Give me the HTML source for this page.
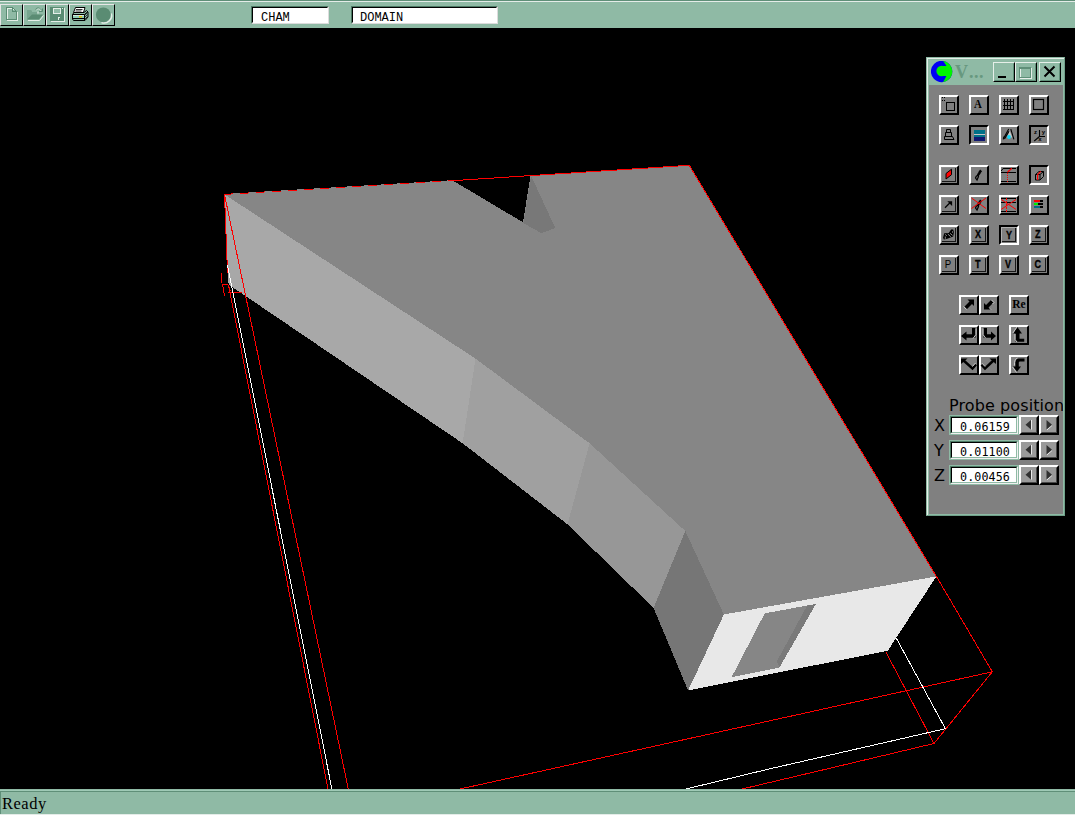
<!DOCTYPE html>
<html><head><meta charset="utf-8"><title>VR Viewer</title>
<style>
html,body{margin:0;padding:0;background:#000;}
body{width:1075px;height:815px;position:relative;overflow:hidden;font-family:"Liberation Sans",sans-serif;}
.abs{position:absolute;}
#toolbar{left:0;top:0;width:1075px;height:28px;background:#8fbaa5;}
#toolbar .l0{left:0;top:0;width:1075px;height:1px;background:#5f8f78;}
#toolbar .l1{left:0;top:1px;width:1075px;height:1px;background:#e4ece8;}
.tb{top:4px;width:23px;height:22px;box-sizing:border-box;border-left:1px solid #e6e6e6;border-top:1px solid #e6e6e6;border-right:1px solid #000;border-bottom:1px solid #000;background:#8fbaa5;}
.field{box-sizing:border-box;background:#fff;border:1px solid;border-color:#4c7a64 #dcdcdc #dcdcdc #4c7a64;}
.field i{position:absolute;left:0;top:0;right:0;bottom:0;border:1px solid;border-color:#000 #fff #fff #000;}
.mono{font-family:"Liberation Mono",monospace;font-size:12px;color:#000;white-space:pre;line-height:14px;}
#status{left:0;top:789px;width:1075px;height:26px;background:#8fbaa5;}
#status .l0{left:0;top:1px;width:1075px;height:1px;background:#9fcab6;}
#status .l1{left:0;top:2px;width:1075px;height:1px;background:#5f8f78;}
#status .l2{left:0;top:2px;width:1px;height:23px;background:#5f8f78;}
#status .l3{left:0;top:25px;width:1075px;height:1px;background:#e4ece8;}
#status span{left:2px;top:5.5px;font-family:"Liberation Serif",serif;font-size:16.5px;letter-spacing:0.5px;line-height:18px;color:#000;}
#panel{left:926px;top:57px;width:139px;height:459px;background:#8fbaa5;box-sizing:border-box;border:1px solid;border-color:#8fbaa5 #6fa089 #6fa089 #8fbaa5;}
#pbody{left:2px;top:27px;width:134px;height:429px;background:#808080;}
.b{width:20px;height:20px;box-sizing:border-box;border:2px solid;border-color:#fff #000 #000 #fff;background:#808080;}
.b.p{border-color:#000 #fff #fff #000;}
.b svg{position:absolute;left:-2px;top:-2px;width:20px;height:20px;}
.cap{top:4px;width:22px;height:20px;box-sizing:border-box;border:1px solid;border-color:#e6efe9 #000 #000 #e6efe9;background:#8fbaa5;}
.cap:after{content:"";position:absolute;left:0;top:0;right:0;bottom:0;border:1px solid;border-color:#8fbaa5 #5f8f78 #5f8f78 #8fbaa5;}
.pl{font-family:"DejaVu Sans",sans-serif;font-size:16px;color:#000;line-height:18px;white-space:nowrap;}
.pf{left:22px;width:70px;height:20px;box-sizing:border-box;border:1px solid #8fbaa5;background:#fff;}
.pf i{position:absolute;left:0;top:0;right:0;bottom:0;border:1px solid;border-color:#4c7a64 #f0f0f0 #f0f0f0 #4c7a64;}
.pf i:after{content:"";position:absolute;left:0;top:0;right:0;bottom:0;border:1px solid;border-color:#000 #8fbaa5 #8fbaa5 #000;}
.pf span{position:absolute;left:10px;top:5px;letter-spacing:0.1px;font-family:"DejaVu Sans Mono",monospace;font-size:11.7px;line-height:13px;color:#000;}
.ab{width:20px;height:20px;box-sizing:border-box;border:2px solid;border-color:#fff #000 #000 #fff;background:#9a9a9a;}
.ab:after{content:"";position:absolute;left:0;top:0;right:0;bottom:0;border:1px solid;border-color:#9a9a9a #484848 #484848 #9a9a9a;}
</style></head><body>

<!-- 3D scene -->
<svg class="abs" style="left:0;top:0" width="1075" height="815" viewBox="0 0 1075 815" shape-rendering="crispEdges">
<rect x="0" y="28" width="1075" height="761" fill="#000"/>
<g id="solid">
<polygon fill="#868686" stroke="#868686" stroke-width="1" points="224.5,194.4 452.1,180.7 523.3,223.1 531.1,175.7 689.3,165.3 936.4,576.4 723.7,614.5 685.3,531 589.6,443.3 475.5,358.6"/>
<polygon fill="#787878" points="531.1,175.7 523.3,223.1 541.4,233.2 555.3,228.1"/>
<polygon fill="#a8a8a8" points="224.5,194.4 475.5,358.6 462.6,443.3 228.6,284.5"/>
<polygon fill="#a0a0a0" points="475.5,358.6 589.6,443.3 567.5,524.3 462.6,443.3"/>
<polygon fill="#979797" points="589.6,443.3 685.3,531 653.6,608 567.5,524.3"/>
<polygon fill="#767676" points="685.3,531 723.9,614.5 688.1,690.5 653.6,608"/>
<polygon fill="#e8e8e8" points="723.9,614.5 936.4,576.4 887.8,650.7 688.1,690.5"/>
<polygon fill="#868686" points="764.7,613.4 815.9,603.9 779.5,667.5 731.6,677.2"/>
<polygon fill="#7a7a7a" points="815.9,603.9 807.1,605.7 776.9,661.3 779.5,667.5"/>
</g>
<g id="wire" fill="none" stroke-width="1">
<path stroke="#ff0000" d="M452.1,180.7 L689.3,165.3 L936.4,576.4 L992.3,671.8 L459.9,789 M992.3,671.8 L934,743.5 L822.5,770 L742,789 M886.1,652.4 L934,743.5 M224.5,194.4 L348.3,789 M224.5,194.4 L227.5,273 M228.4,284.6 L328,789 M221.5,273 V283 M222,284.5 H228.4 M222.5,284 L224.4,295.7 M228.4,292.5 H242 M228.4,284.6 L230.5,291.500"/>
<path stroke="#ff0000" stroke-dasharray="9,7" d="M224.5,194.4 L452.1,180.700"/>
<path stroke="#ffffff" d="M227.5,265 L331.9,789 M896.2,638 L945.4,728.7 L769,769 L686,789"/>
</g>
</svg>

<!-- toolbar -->
<div id="toolbar" class="abs">
<div class="abs l0"></div><div class="abs l1"></div>
<div class="abs tb" style="left:0"><svg class="abs" style="left:-1px;top:-1px" width="23" height="22" shape-rendering="crispEdges"><path d="M7.5,4.500H13.500L17.500,8.500V16.500H7.500Z" fill="none" stroke="#e6efe9"/><path d="M6.500,3.500H12.500L16.500,7.500V15.500H6.500Z" fill="none" stroke="#5a8c73"/><path d="M12.500,3.500V7.500H16.500" fill="none" stroke="#5a8c73"/><rect x="13" y="5" width="1" height="1" fill="#e6efe9"/></svg></div>
<div class="abs tb" style="left:23px"><svg class="abs" style="left:-1px;top:-1px" width="23" height="22"><path d="M5,16.500H16.500L20.500,11.500" fill="none" stroke="#e6efe9"/><path d="M4,6H8L9,8H14V10.500H20L16,15.500H4Z" fill="#5a8c73"/><path d="M4,6H8L9,8H14V10.500H9L4,15.500Z" fill="#8fbaa5" fill-opacity="0.55"/><path d="M12.500,5.500C14,3 17,3.500 18.500,6.500" fill="none" stroke="#5a8c73"/><path d="M13.500,6C15,4.500 17,4.500 18,7" fill="none" stroke="#e6efe9" opacity="0.8"/><path d="M16,7.500H19.500V4.500" fill="none" stroke="#5a8c73"/><path d="M15,9.500V7.500" stroke="#e6efe9"/></svg></div>
<div class="abs tb" style="left:46px"><svg class="abs" style="left:-1px;top:-1px" width="23" height="22" shape-rendering="crispEdges"><path d="M5,17.500H18.500V4" fill="none" stroke="#e6efe9"/><rect x="4" y="3" width="14" height="14" fill="#5a8c73"/><rect x="7.500" y="4.500" width="7" height="5" fill="#8fbaa5" stroke="#e6efe9"/><rect x="12" y="13" width="2" height="3" fill="#e6efe9"/><rect x="13" y="14" width="1" height="2" fill="#5a8c73"/><rect x="16" y="4" width="1" height="1" fill="#e6efe9"/></svg></div>
<div class="abs tb" style="left:69px"><svg class="abs" style="left:-1px;top:-1px" width="23" height="22"><path d="M6.500,3.500H16L14.500,8.500H4.500Z" fill="#fff" stroke="#000"/><path d="M7,5.500H13.500 M6.500,7H12.500" stroke="#000" stroke-width="0.8"/><path d="M3.500,10.500L5,8.500H15L17.500,6.500L19,8V13L16,16.500H4.500L3.500,15Z" fill="#8fbaa5" stroke="#000"/><path d="M3.500,10.500H15.500V16 M15.500,10.500L19,7.500" fill="none" stroke="#000"/><rect x="4" y="11" width="11" height="2.500" fill="#d8e8e0"/><rect x="4" y="12" width="11" height="2" fill="#8fcfb5"/><rect x="10" y="12" width="3" height="1.500" fill="#e0c000"/><path d="M4,14.500H15" stroke="#000"/><path d="M16,11L18.500,8.500 M16,13L18.500,10.500 M16,15L18.500,12.500" stroke="#000" stroke-width="0.7"/></svg></div>
<div class="abs tb" style="left:92px"><svg class="abs" style="left:-1px;top:-1px" width="23" height="22"><path d="M19.300,9.500A7.600,7.600 0 0 1 9.500,18.600" fill="none" stroke="#e6efe9" stroke-width="1.6"/><circle cx="11.300" cy="10.800" r="7.400" fill="#5a8c73"/></svg></div>
<div class="abs field" style="left:251px;top:6px;width:78px;height:18px"><i></i><span class="abs mono" style="left:9px;top:3.5px">CHAM</span></div>
<div class="abs field" style="left:351px;top:6px;width:147px;height:18px"><i></i><span class="abs mono" style="left:8px;top:3.5px">DOMAIN</span></div>
</div>

<!-- status -->
<div id="status" class="abs"><div class="abs l0"></div><div class="abs l1"></div><div class="abs l2"></div><div class="abs l3"></div><span class="abs">Ready</span></div>

<!-- panel -->
<div id="panel" class="abs">
<svg class="abs" style="left:4px;top:3px" width="24" height="24" viewBox="0 0 24 24"><defs><clipPath id="lc"><circle cx="10.6" cy="10.5" r="10.7"/></clipPath></defs><g clip-path="url(#lc)"><rect x="-1" y="-1" width="24" height="24" fill="#0000f4"/><path d="M11.9,-0.5L15.2,4.5V15.5L11.9,21.5H24V-0.500Z" fill="#00f400"/><circle cx="10.6" cy="10" r="5.200" fill="#00f400"/><rect x="10.6" y="5" width="6" height="10" fill="#00f400"/></g></svg>
<span class="abs" style="left:28px;top:3px;font-family:'Liberation Serif',serif;font-weight:bold;font-size:18px;line-height:22px;color:#67987f;letter-spacing:0.5px"><span style="margin-right:0.4px">V</span>...</span>
<div class="abs cap" style="left:66px"><svg class="abs" style="left:-1px;top:-1px" width="22" height="20" shape-rendering="crispEdges"><rect x="5" y="14" width="8" height="2" fill="#000"/></svg></div>
<div class="abs cap" style="left:88px"><svg class="abs" style="left:-1px;top:-1px" width="22" height="20" shape-rendering="crispEdges"><rect x="5.5" y="6.500" width="11" height="10" fill="none" stroke="#e6efe9"/><rect x="4.5" y="6.500" width="11" height="9" fill="none" stroke="#5f8f78"/><rect x="4" y="5" width="12" height="2" fill="#5f8f78"/></svg></div>
<div class="abs cap" style="left:112px"><svg class="abs" style="left:-1px;top:-1px" width="22" height="20"><path d="M5.5,4.500L15.500,14.500 M15.500,4.500L5.500,14.500" stroke="#000" stroke-width="2"/></svg></div>
<div id="pbody" class="abs"></div><div class="abs" style="left:0;top:0;width:137px;height:1px;background:#e6efe9"></div><div class="abs" style="left:0;top:0;width:1px;height:457px;background:#e6efe9"></div>
<div class="abs b" style="left:12px;top:37px"><svg viewBox="0 0 20 20" shape-rendering="crispEdges"><rect x="7.500" y="7.500" width="8" height="8" stroke="#000" fill="none"/><path d="M3,2h1v1h-1z M5,2h1v1h-1z M3,5h1v1h-1z M5,5h1v1h-1z" fill="#000"/></svg></div>
<div class="abs b" style="left:42px;top:37px"><svg viewBox="0 0 20 20" shape-rendering="crispEdges"><text transform="translate(8.9,12.8) scale(0.9,1)" font-family="Liberation Serif,sans-serif" font-size="12" font-weight="bold" text-anchor="middle" fill="#000" shape-rendering="auto">A</text></svg></div>
<div class="abs b" style="left:72px;top:37px"><svg viewBox="0 0 20 20" shape-rendering="crispEdges"><path d="M5.500,4V15 M8.500,4V15 M11.500,4V15 M14.500,4V15 M4,6.500H15 M4,10.500H15 M4,14.500H15" stroke="#000" fill="none"/></svg></div>
<div class="abs b" style="left:102px;top:37px"><svg viewBox="0 0 20 20" shape-rendering="crispEdges"><rect x="4.500" y="4.500" width="10" height="10" stroke="#000" fill="none" stroke-width="1.200" shape-rendering="auto"/></svg></div>
<div class="abs b" style="left:12px;top:67px"><svg viewBox="0 0 20 20" shape-rendering="crispEdges"><path d="M7.500,4.500H11.500V7.500H7.500Z M6.500,7.500H12.500V11.500H6.500Z M5.500,11.500H13.500L15,14.500H5.500Z" stroke="#000" fill="none" shape-rendering="auto"/></svg></div>
<div class="abs b p" style="left:42px;top:67px"><svg viewBox="0 0 20 20" shape-rendering="crispEdges"><rect x="5" y="5" width="11" height="4" fill="#007088"/><rect x="5" y="8.500" width="11" height="1.500" fill="#c8c4c4"/><rect x="5" y="10" width="11" height="2" fill="#007088"/><rect x="5" y="12" width="11" height="4" fill="#101870"/></svg></div>
<div class="abs b" style="left:72px;top:67px"><svg viewBox="0 0 20 20" shape-rendering="crispEdges"><path d="M10.700,5.500L8,12.500H13.300Z" fill="#c8c8c8" shape-rendering="auto"/><path d="M9.700,4.100L4.500,13.500 M10,6.200L5.500,14 M4.300,14.400L4.800,11.500 M11.800,4.100L14.900,14.400" stroke="#000" fill="none" shape-rendering="auto" stroke-width="1.100"/><circle cx="10" cy="12" r="1.900" fill="#10d8f8" shape-rendering="auto"/></svg></div>
<div class="abs b p" style="left:102px;top:67px"><svg viewBox="0 0 20 20" shape-rendering="crispEdges"><path d="M10.500,5V11.500H16 M10.500,11.500L5.200,16" stroke="#000" fill="none" shape-rendering="auto" stroke-width="1.100"/><text transform="translate(6.5,8.6) scale(1,1)" font-family="Liberation Sans,sans-serif" font-size="6" font-weight="bold" text-anchor="middle" fill="#000" shape-rendering="auto">z</text><text transform="translate(14.4,8.6) scale(1,1)" font-family="Liberation Sans,sans-serif" font-size="6" font-weight="bold" text-anchor="middle" fill="#000" shape-rendering="auto">y</text><text transform="translate(10.8,15.9) scale(1,1)" font-family="Liberation Sans,sans-serif" font-size="6" font-weight="bold" text-anchor="middle" fill="#000" shape-rendering="auto">x</text></svg></div>
<div class="abs b" style="left:12px;top:107px"><svg viewBox="0 0 20 20" shape-rendering="crispEdges"><path d="M16.5,3 V16.5 H3" stroke="#181818" fill="none"/><path d="M2.5,17 V2.500 H17" stroke="#8e8e8e" fill="none"/><path d="M12.500,4.200L7,8.500V14L12.500,9.700Z" fill="#f00" stroke="#000" shape-rendering="auto"/></svg></div>
<div class="abs b" style="left:42px;top:107px"><svg viewBox="0 0 20 20" shape-rendering="crispEdges"><path d="M10.200,6.800L11.200,5.500L12.200,6.300L11.200,7.600Z M8.800,9.300L10,7.500L11,8.300L9.800,10Z M7.300,11.200L8.800,10.200L9.500,11.500L8,15L6.500,13Z" stroke="#000" fill="none" stroke-width="1.250" shape-rendering="auto"/></svg></div>
<div class="abs b" style="left:72px;top:107px"><svg viewBox="0 0 20 20" shape-rendering="crispEdges"><path d="M4,3.500H17 M2,7.500H17 M2,16.500H17" stroke="#000" fill="none"/><path d="M2.200,6L4,3.500" stroke="#000" shape-rendering="auto"/><path d="M12.800,3.200L8.500,7.300" stroke="#f00" stroke-width="1.200" shape-rendering="auto"/><path d="M8.500,8V18" stroke="#f00" stroke-dasharray="1,1"/></svg></div>
<div class="abs b p" style="left:102px;top:107px"><svg viewBox="0 0 20 20" shape-rendering="crispEdges"><path d="M6.500,9.500H11V15H6.500Z M6.500,9.500L10,6.500H14.500L11,9.500 M14.500,6.500V11.500L11,15" stroke="#000" fill="none" shape-rendering="auto"/><path d="M8.600,15V9.700L11.700,6.300" stroke="#f00" fill="none" shape-rendering="auto" stroke-width="1.200"/></svg></div>
<div class="abs b" style="left:12px;top:137px"><svg viewBox="0 0 20 20" shape-rendering="crispEdges"><path d="M16.5,3 V16.5 H3" stroke="#181818" fill="none"/><path d="M2.5,17 V2.500 H17" stroke="#8e8e8e" fill="none"/><path d="M6,12.700L11,7.800" stroke="#000" stroke-width="1.200" shape-rendering="auto"/><path d="M8.300,6.200H13.100V11Z" fill="#000" shape-rendering="auto"/></svg></div>
<div class="abs b" style="left:42px;top:137px"><svg viewBox="0 0 20 20" shape-rendering="crispEdges"><path d="M10.200,6.800L11.200,5.500L12.200,6.300L11.200,7.600Z M8.800,9.300L10,7.500L11,8.300L9.800,10Z M7.300,11.200L8.800,10.200L9.500,11.500L8,15L6.500,13Z" stroke="#000" fill="none" stroke-width="1.250" shape-rendering="auto"/><path d="M2.500,3L17,13.500 M17,3L2.500,13.500" stroke="#f00" shape-rendering="auto"/></svg></div>
<div class="abs b" style="left:72px;top:137px"><svg viewBox="0 0 20 20" shape-rendering="crispEdges"><path d="M2,3.500H17 M2,7.500H17 M2,16.500H17" stroke="#000" fill="none"/><path d="M2.200,4.500L17,14.400 M17,4.500L2.200,14.400" stroke="#f00" shape-rendering="auto"/><path d="M7.500,3V18" stroke="#f00" stroke-dasharray="2,1"/></svg></div>
<div class="abs b" style="left:102px;top:137px"><svg viewBox="0 0 20 20" shape-rendering="crispEdges"><rect x="5" y="5" width="6" height="2" fill="#f00"/><rect x="11" y="5" width="3" height="2" fill="#000"/><rect x="5" y="8" width="4" height="2" fill="#0e0"/><rect x="9" y="8" width="5" height="2" fill="#000"/><rect x="5" y="11" width="6" height="2" fill="#006a84"/><rect x="11" y="11" width="3" height="2" fill="#000"/></svg></div>
<div class="abs b" style="left:12px;top:167px"><svg viewBox="0 0 20 20" shape-rendering="crispEdges"><path d="M16.5,3 V16.5 H3" stroke="#181818" fill="none"/><path d="M2.5,17 V2.500 H17" stroke="#8e8e8e" fill="none"/><path d="M5.200,8.300L9.700,8L12.100,4.400H14.200L14.900,7L14.200,11.400L8.300,13.800L4.900,14.500L4,12.800Z" fill="#000" shape-rendering="auto"/><path d="M6.200,9.400L7.800,10.800 M8.800,9L11.800,11.800 M11.100,8.300L13.500,10.400 M6.300,11.500V13.800 M13.500,6.300V7.700" stroke="#9a9a9a" stroke-width="0.9" fill="none" shape-rendering="auto"/></svg></div>
<div class="abs b" style="left:42px;top:167px"><svg viewBox="0 0 20 20" shape-rendering="crispEdges"><path d="M16.5,3 V16.5 H3" stroke="#181818" fill="none"/><path d="M2.5,17 V2.500 H17" stroke="#8e8e8e" fill="none"/><text transform="translate(8.9,12.8) scale(0.85,1)" font-family="Liberation Sans,sans-serif" font-size="10.7" font-weight="bold" text-anchor="middle" fill="#000" stroke="#000" stroke-width="0.3" shape-rendering="auto">X</text></svg></div>
<div class="abs b p" style="left:72px;top:167px"><svg viewBox="0 0 20 20" shape-rendering="crispEdges"><path d="M2.500,17.500 V2.500 H17.500" stroke="#b0b0b0" fill="none"/><path d="M16.500,3 V16.500 H3" stroke="#181818" fill="none"/><text transform="translate(9.9,13.8) scale(0.85,1)" font-family="Liberation Sans,sans-serif" font-size="10.7" font-weight="bold" text-anchor="middle" fill="#000" stroke="#000" stroke-width="0.3" shape-rendering="auto">Y</text></svg></div>
<div class="abs b" style="left:102px;top:167px"><svg viewBox="0 0 20 20" shape-rendering="crispEdges"><path d="M16.5,3 V16.5 H3" stroke="#181818" fill="none"/><path d="M2.5,17 V2.500 H17" stroke="#8e8e8e" fill="none"/><text transform="translate(8.9,12.8) scale(0.85,1)" font-family="Liberation Sans,sans-serif" font-size="10.7" font-weight="bold" text-anchor="middle" fill="#000" stroke="#000" stroke-width="0.3" shape-rendering="auto">Z</text></svg></div>
<div class="abs b" style="left:12px;top:197px"><svg viewBox="0 0 20 20" shape-rendering="crispEdges"><path d="M16.5,3 V16.5 H3" stroke="#181818" fill="none"/><path d="M2.5,17 V2.500 H17" stroke="#8e8e8e" fill="none"/><text transform="translate(8.9,12.8) scale(0.9,1)" font-family="Liberation Sans,sans-serif" font-size="10.7" font-weight="normal" text-anchor="middle" fill="#000" shape-rendering="auto">P</text></svg></div>
<div class="abs b" style="left:42px;top:197px"><svg viewBox="0 0 20 20" shape-rendering="crispEdges"><path d="M16.5,3 V16.5 H3" stroke="#181818" fill="none"/><path d="M2.5,17 V2.500 H17" stroke="#8e8e8e" fill="none"/><text transform="translate(8.9,12.8) scale(0.85,1)" font-family="Liberation Sans,sans-serif" font-size="10.7" font-weight="bold" text-anchor="middle" fill="#000" stroke="#000" stroke-width="0.3" shape-rendering="auto">T</text></svg></div>
<div class="abs b" style="left:72px;top:197px"><svg viewBox="0 0 20 20" shape-rendering="crispEdges"><path d="M16.5,3 V16.5 H3" stroke="#181818" fill="none"/><path d="M2.5,17 V2.500 H17" stroke="#8e8e8e" fill="none"/><text transform="translate(8.9,12.8) scale(0.85,1)" font-family="Liberation Sans,sans-serif" font-size="10.7" font-weight="bold" text-anchor="middle" fill="#000" stroke="#000" stroke-width="0.3" shape-rendering="auto">V</text></svg></div>
<div class="abs b" style="left:102px;top:197px"><svg viewBox="0 0 20 20" shape-rendering="crispEdges"><path d="M16.5,3 V16.5 H3" stroke="#181818" fill="none"/><path d="M2.5,17 V2.500 H17" stroke="#8e8e8e" fill="none"/><text transform="translate(8.9,12.8) scale(0.85,1)" font-family="Liberation Sans,sans-serif" font-size="10.7" font-weight="bold" text-anchor="middle" fill="#000" stroke="#000" stroke-width="0.3" shape-rendering="auto">C</text></svg></div>
<div class="abs b" style="left:32px;top:237px"><svg viewBox="0 0 20 20" shape-rendering="crispEdges"><path d="M8.5,4.500H15V11L13,9L8,14L5.500,11.500L10.500,6.500Z" fill="#000" shape-rendering="auto"/><path d="M4.500,11.500L7.500,14.500" stroke="#c8c8c8" shape-rendering="auto"/></svg></div>
<div class="abs b" style="left:52px;top:237px"><svg viewBox="0 0 20 20" shape-rendering="crispEdges"><path d="M5,14.500V8L7,10L12,5L14.500,7.500L9.500,12.500L11.500,14.500Z" fill="#000" shape-rendering="auto"/><path d="M12.500,5L15,7.500L13.500,9 M11,13.500L12,14.500" stroke="#c8c8c8" fill="none" shape-rendering="auto"/></svg></div>
<div class="abs b" style="left:82px;top:237px"><svg viewBox="0 0 20 20" shape-rendering="crispEdges"><text transform="translate(10,13.3) scale(1,1)" font-family="Liberation Serif,sans-serif" font-size="11.5" font-weight="bold" text-anchor="middle" fill="#000" shape-rendering="auto">Re</text></svg></div>
<div class="abs b" style="left:32px;top:267px"><svg viewBox="0 0 20 20" shape-rendering="crispEdges"><path d="M2,11L7.500,6.500V9.300H13V3H16.500V12.700H7.500V15.500Z" fill="#000" shape-rendering="auto"/><path d="M17,3.500V9.500L14,13.500" stroke="#c8c8c8" fill="none" shape-rendering="auto"/></svg></div>
<div class="abs b" style="left:52px;top:267px"><svg viewBox="0 0 20 20" shape-rendering="crispEdges"><path d="M17,11L12,6.500V9.300H8V3H4.500V12.700H12V15.500Z" fill="#000" shape-rendering="auto"/><path d="M4,3.500V9.500L6.500,13" stroke="#c8c8c8" fill="none" shape-rendering="auto"/></svg></div>
<div class="abs b" style="left:82px;top:267px"><svg viewBox="0 0 20 20" shape-rendering="crispEdges"><path d="M8.300,2L13,8.600H10.500V13.700H15.200V16.700H6.500V8.600H4.300Z" fill="#000" shape-rendering="auto"/><path d="M8,2L3.800,8 M6,9V14.500L8,17" stroke="#c8c8c8" fill="none" shape-rendering="auto"/></svg></div>
<div class="abs b" style="left:32px;top:297px"><svg viewBox="0 0 20 20" shape-rendering="crispEdges"><path d="M2,3.400H8.500L2,9Z" fill="#000" shape-rendering="auto"/><path d="M4,5L13.500,13.500L17,9.500" stroke="#000" stroke-width="2.500" fill="none" shape-rendering="auto"/><path d="M13.500,11.500L16.500,8" stroke="#c8c8c8" fill="none" shape-rendering="auto"/></svg></div>
<div class="abs b" style="left:52px;top:297px"><svg viewBox="0 0 20 20" shape-rendering="crispEdges"><path d="M17,3.400H10.500L17,9Z" fill="#000" shape-rendering="auto"/><path d="M15,5L6,13.500L2.500,9.700" stroke="#000" stroke-width="2.500" fill="none" shape-rendering="auto"/><path d="M6,11.500L3,8.200" stroke="#c8c8c8" fill="none" shape-rendering="auto"/></svg></div>
<div class="abs b" style="left:82px;top:297px"><svg viewBox="0 0 20 20" shape-rendering="crispEdges"><path d="M15.500,3.400H10Q6.400,3.400 6.400,7V11.400H4L8,16.800L12,11.400H9.800V7.500Q9.800,6.400 11,6.400H15.500Z" fill="#000" shape-rendering="auto"/><path d="M8.500,3Q5.500,4 5.500,7.500V10.500 M3.500,12L7.500,17.500" stroke="#c8c8c8" fill="none" shape-rendering="auto"/></svg></div>
<div class="abs" style="left:2px;top:336px;width:134px;height:22px;overflow:hidden"><span class="abs pl" style="left:20px;top:2.5px;letter-spacing:0.1px">Probe position</span></div>
<span class="abs pl" style="left:7px;top:359px">X</span>
<div class="abs pf" style="top:357px"><i></i><span>0.06159</span></div>
<div class="abs ab" style="left:92px;top:357px"><svg class="abs" style="left:-2px;top:-2px" width="20" height="20"><path d="M12.5,5V14.500" stroke="#e8e8e8"/><path d="M12,5V14.500L6.500,9.750Z" fill="#303030"/></svg></div>
<div class="abs ab" style="left:112px;top:357px"><svg class="abs" style="left:-2px;top:-2px" width="20" height="20"><path d="M13,10.500L8,14.800" stroke="#e8e8e8"/><path d="M7.500,5V14.500L13,9.750Z" fill="#303030"/></svg></div>
<span class="abs pl" style="left:7px;top:384px">Y</span>
<div class="abs pf" style="top:382px"><i></i><span>0.01100</span></div>
<div class="abs ab" style="left:92px;top:382px"><svg class="abs" style="left:-2px;top:-2px" width="20" height="20"><path d="M12.5,5V14.500" stroke="#e8e8e8"/><path d="M12,5V14.500L6.500,9.750Z" fill="#303030"/></svg></div>
<div class="abs ab" style="left:112px;top:382px"><svg class="abs" style="left:-2px;top:-2px" width="20" height="20"><path d="M13,10.500L8,14.800" stroke="#e8e8e8"/><path d="M7.500,5V14.500L13,9.750Z" fill="#303030"/></svg></div>
<span class="abs pl" style="left:7px;top:409px">Z</span>
<div class="abs pf" style="top:407px"><i></i><span>0.00456</span></div>
<div class="abs ab" style="left:92px;top:407px"><svg class="abs" style="left:-2px;top:-2px" width="20" height="20"><path d="M12.5,5V14.500" stroke="#e8e8e8"/><path d="M12,5V14.500L6.500,9.750Z" fill="#303030"/></svg></div>
<div class="abs ab" style="left:112px;top:407px"><svg class="abs" style="left:-2px;top:-2px" width="20" height="20"><path d="M13,10.500L8,14.800" stroke="#e8e8e8"/><path d="M7.500,5V14.500L13,9.750Z" fill="#303030"/></svg></div>
</div>

</body></html>
